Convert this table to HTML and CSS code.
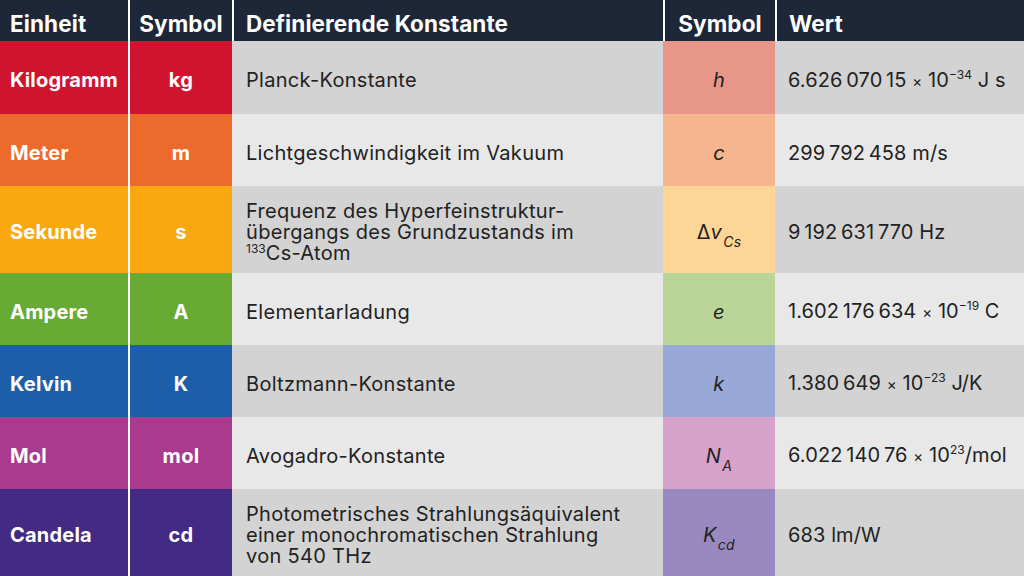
FILE: index.html
```html
<!DOCTYPE html>
<html lang="de">
<head>
<meta charset="utf-8">
<title>SI-Basiseinheiten</title>
<link rel="stylesheet" href="styles.css">
</head>
<body>
<div class="table">
  <div class="row head">
    <div class="c c1"><span>Einheit</span></div>
    <div class="c c2"><span>Symbol</span></div>
    <div class="c c3"><span>Definierende Konstante</span></div>
    <div class="c c4"><span>Symbol</span></div>
    <div class="c c5"><span>Wert</span></div>
  </div>
  <div class="row dark r-kg">
    <div class="c c1"><span>Kilogramm</span></div>
    <div class="c c2"><span>kg</span></div>
    <div class="c c3"><span>Planck-Konstante</span></div>
    <div class="c c4"><span><i>h</i></span></div>
    <div class="c c5"><span>6.626&#8239;070&#8239;15 <span class="x">×</span> 10<sup>−34</sup> J s</span></div>
  </div>
  <div class="row light r-m">
    <div class="c c1"><span>Meter</span></div>
    <div class="c c2"><span>m</span></div>
    <div class="c c3"><span>Lichtgeschwindigkeit im Vakuum</span></div>
    <div class="c c4"><span><i>c</i></span></div>
    <div class="c c5"><span>299&#8239;792&#8239;458 m/s</span></div>
  </div>
  <div class="row dark tall r-s">
    <div class="c c1"><span>Sekunde</span></div>
    <div class="c c2"><span>s</span></div>
    <div class="c c3"><span>Frequenz des Hyperfeinstruktur-<br>übergangs des Grundzustands im<br><sup class="iso">133</sup>Cs-Atom</span></div>
    <div class="c c4"><span>Δ<i>v</i><sub><i>Cs</i></sub></span></div>
    <div class="c c5"><span>9&#8239;192&#8239;631&#8239;770 Hz</span></div>
  </div>
  <div class="row light r-a">
    <div class="c c1"><span>Ampere</span></div>
    <div class="c c2"><span>A</span></div>
    <div class="c c3"><span>Elementarladung</span></div>
    <div class="c c4"><span><i>e</i></span></div>
    <div class="c c5"><span>1.602&#8239;176&#8239;634 <span class="x">×</span> 10<sup>−19</sup> C</span></div>
  </div>
  <div class="row dark r-k">
    <div class="c c1"><span>Kelvin</span></div>
    <div class="c c2"><span>K</span></div>
    <div class="c c3"><span>Boltzmann-Konstante</span></div>
    <div class="c c4"><span><i>k</i></span></div>
    <div class="c c5"><span>1.380&#8239;649 <span class="x">×</span> 10<sup>−23</sup> J/K</span></div>
  </div>
  <div class="row light r-mol">
    <div class="c c1"><span>Mol</span></div>
    <div class="c c2"><span>mol</span></div>
    <div class="c c3"><span>Avogadro-Konstante</span></div>
    <div class="c c4"><span><i>N</i><sub><i>A</i></sub></span></div>
    <div class="c c5"><span>6.022&#8239;140&#8239;76 <span class="x">×</span> 10<sup>23</sup>/mol</span></div>
  </div>
  <div class="row dark tall r-cd">
    <div class="c c1"><span>Candela</span></div>
    <div class="c c2"><span>cd</span></div>
    <div class="c c3"><span>Photometrisches Strahlungsäquivalent<br>einer monochromatischen Strahlung<br>von 540 THz</span></div>
    <div class="c c4"><span><i>K</i><sub><i>cd</i></sub></span></div>
    <div class="c c5"><span>683 lm/W</span></div>
  </div>
</div>
</body>
</html>
```
FILE: styles.css
```css
html, body {
  margin: 0;
  padding: 0;
  width: 1024px;
  height: 576px;
  overflow: hidden;
  font-family: Inter, "Liberation Sans", sans-serif;
}

.table {
  display: flex;
  flex-direction: column;
  width: 1024px;
}

.row {
  display: grid;
  grid-template-columns: 128px 104px 431px 112px 249px;
  height: 72px;
}
.row.tall { height: 87px; }
.row.r-kg { height: 73px; }

.c {
  display: flex;
  align-items: center;
  box-sizing: border-box;
  padding-top: 6px;
  font-size: 20px;
  line-height: 21px;
  letter-spacing: 0.3px;
  color: #222;
}

.head { height: 41px; background: #1e2738; }
.head .c {
  color: #fff;
  font-weight: 700;
  font-size: 22.5px;
  letter-spacing: 0.1px;
  padding-top: 6px;
}
.head .c2, .head .c3, .head .c4, .head .c5 { border-left: 2px solid #fff; }
.head .c3, .head .c5 { padding-left: 12px; }

.c1 {
  padding-left: 10px;
  color: #fff;
  font-weight: 700;
  letter-spacing: 0.2px;
}
.c2 {
  justify-content: center;
  color: #fff;
  font-weight: 700;
  border-left: 2px solid #fff;
}
.c3 { padding-left: 14px; }
.c4 { justify-content: center; }
.c5 { padding-left: 13px; letter-spacing: 0.1px; }
.x { font-size: 15px; }

.dark .c3, .dark .c5 { background: #d3d3d3; }
.light .c3, .light .c5 { background: #e8e8e8; }

.r-kg .c1, .r-kg .c2 { background: #d0132f; }
.r-kg .c4 { background: #e9968a; }
.r-m .c1, .r-m .c2 { background: #ec6a2c; }
.r-m .c4 { background: #f5b58f; }
.r-s .c1, .r-s .c2 { background: #f9a90f; }
.r-s .c4 { background: #fdd596; }
.r-a .c1, .r-a .c2 { background: #67ab35; }
.r-a .c4 { background: #b9d698; }
.r-k .c1, .r-k .c2 { background: #1c5ea8; }
.r-k .c4 { background: #98a9d8; }
.r-mol .c1, .r-mol .c2 { background: #a93a8e; }
.r-mol .c4 { background: #d7a3cc; }
.r-cd .c1, .r-cd .c2 { background: #432a84; }
.r-cd .c4 { background: #9a89c0; }

sup {
  font-size: 12px;
  vertical-align: 8px;
  line-height: 0;
  letter-spacing: 0;
}
sub {
  font-size: 14px;
  vertical-align: -8px;
  line-height: 0;
  margin-left: 1px;
}
sup.iso { font-size: 12px; vertical-align: 7px; }
i { font-style: italic; }
```
